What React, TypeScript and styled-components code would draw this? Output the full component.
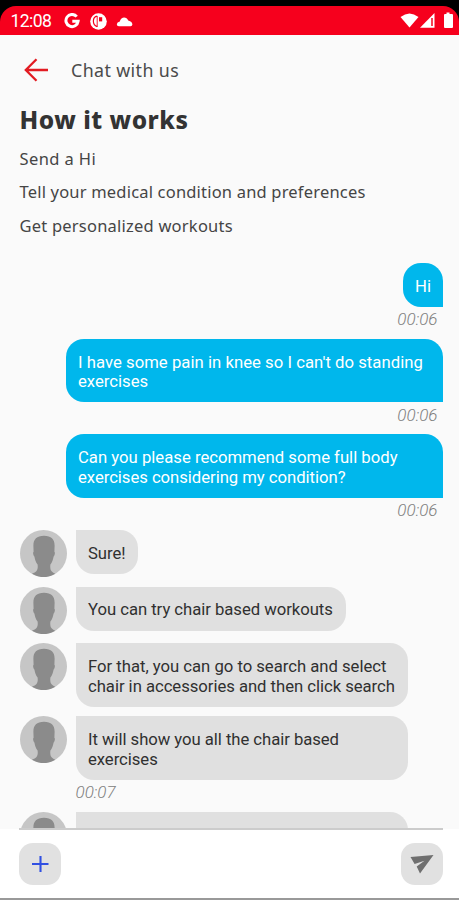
import React from 'react';
import styled, { createGlobalStyle } from 'styled-components';

const GlobalStyle = createGlobalStyle`
  * { box-sizing: border-box; }
  html, body { margin: 0; padding: 0; background: #000; }
`;

const Screen = styled.div`
  width: 459px;
  height: 900px;
  display: flex;
  flex-direction: column;
  overflow: hidden;
  background: #000;
  font-family: Roboto, sans-serif;
`;

const StatusBar = styled.header`
  flex: none;
  height: 28.5px;
  margin-top: 6px;
  padding: 2px 5px 0 10.5px;
  display: flex;
  align-items: center;
  justify-content: space-between;
  color: #fff;
  background: #f6001d;
  border-radius: 16px 16px 0 0;
`;

const StatusGroup = styled.div<{ $gap: number }>`
  display: flex;
  align-items: center;
  gap: ${({ $gap }) => $gap}px;
  svg { display: block; }
`;

const Clock = styled.span`
  width: 44px;
  font-size: 17.6px;
  font-weight: 400;
  line-height: 20px;
  letter-spacing: -0.6px;
  white-space: nowrap;
`;

const Content = styled.main`
  flex: none;
  height: 794.5px;
  padding-top: 14.5px;
  overflow: hidden;
  background: #fafafa;
`;

const TitleBar = styled.div`
  height: 42px;
  padding-left: 24px;
  display: flex;
  align-items: center;
  gap: 23px;
`;

const Title = styled.h1`
  margin: 0;
  font: 400 17.8px/24px "Noto Sans", sans-serif;
  letter-spacing: 0.4px;
  color: #4b4b4b;
`;

const Intro = styled.section`
  padding: 12px 20px 0 19.5px;
  height: 172px;
  font-family: "Noto Sans", sans-serif;
  color: #454545;
`;

const Heading = styled.h2`
  margin: 0 0 5px;
  font-size: 24.5px;
  font-weight: 800;
  line-height: 34px;
  letter-spacing: 0.5px;
  color: #333;
`;

const Step = styled.p<{ $spacing: number }>`
  margin: 0;
  font-size: 16.5px;
  line-height: 33.3px;
  white-space: nowrap;
  letter-spacing: ${({ $spacing }) => $spacing}px;
`;

const Messages = styled.section`
  display: flex;
  flex-direction: column;
  padding: 0 16px 0 19.5px;
`;

const IncomingRow = styled.div`
  display: flex;
  align-items: flex-start;
  gap: 9.5px;
  margin-bottom: 9.6px;
  min-height: 47px;
  &:has(+ time) { margin-bottom: 0; }
`;

const Bubble = styled.div<{ $mine?: boolean; $width: number }>`
  width: ${({ $width }) => $width}px;
  padding: 13.8px 0 10.4px 12px;
  font-size: 16.7px;
  line-height: 19.7px;
  white-space: pre;
  align-self: ${({ $mine }) => ($mine ? 'flex-end' : 'flex-start')};
  color: ${({ $mine }) => ($mine ? '#fff' : '#303030')};
  background: ${({ $mine }) => ($mine ? '#00b7ec' : '#e0e0e0')};
  border-radius: ${({ $mine }) => ($mine ? '18px 18px 0 18px' : '0 18px 18px 18px')};
`;

const Line = styled.span<{ $spacing?: number }>`
  display: block;
  letter-spacing: ${({ $spacing = 0 }) => $spacing}px;
`;

const Time = styled.time<{ $mine?: boolean }>`
  height: 32px;
  padding: ${({ $mine }) => ($mine ? '2.4px 5.5px 0 0' : '2.4px 0 0 56px')};
  align-self: ${({ $mine }) => ($mine ? 'flex-end' : 'flex-start')};
  font-size: 17px;
  font-style: italic;
  font-weight: 300;
  line-height: 21px;
  color: #808080;
`;

const Composer = styled.footer`
  flex: none;
  height: 71px;
  padding: 0 16px 0 19px;
  background: #fff;
  border-bottom: 2px solid #999;
`;

const ComposerInner = styled.div`
  height: 69px;
  padding-top: 1px;
  display: flex;
  align-items: center;
  justify-content: space-between;
  border-top: 2px solid #ccc;
  margin-top: -1px;
`;

const RoundButton = styled.button`
  width: 42px;
  height: 42px;
  padding: 0;
  display: grid;
  place-items: center;
  border: 0;
  border-radius: 14px;
  background: #e1e1e1;
`;

const AvatarSvg = styled.svg`
  flex: none;
  display: block;
`;

const Avatar = () => (
  <AvatarSvg width="47" height="47" viewBox="0 0 47 47">
    <circle cx="23.5" cy="23.5" r="23.5" fill="#c6c6c6" />
    <path
      d="M24 5.8C16.5 5.8 13.2 9.5 13.4 16L13.6 21.8C12.6 22 13.3 25.8 14.4 26.4C14.9 29.6 16 32.4 17.6 34.6C18.2 39.5 17.2 42 12 43.8Q23.5 50.5 35.5 43.8C31 42 29.8 39.5 30.4 34.6C32 32.4 33.1 29.6 33.6 26.4C34.7 25.8 35.4 22 34.4 21.8L34.6 16C34.8 9.5 31.5 5.8 24 5.8Z"
      fill="#8b8b8b"
    />
  </AvatarSvg>
);

const BackArrow = () => (
  <svg width="24" height="24" viewBox="0 0 24 24" fill="none" stroke="#e21b22" strokeWidth="2.3">
    <path d="M24 12H2M12.5 1.3L1.8 12L12.5 22.7" />
  </svg>
);

interface Message {
  lines: { text: string; spacing?: number }[];
  width: number;
  mine?: boolean;
  time?: string;
}

const messages: Message[] = [
  { mine: true, width: 40, time: '00:06', lines: [{ text: 'Hi' }] },
  {
    mine: true, width: 377, time: '00:06',
    lines: [{ text: "I have some pain in knee so I can't do standing", spacing: 0.03 }, { text: 'exercises' }],
  },
  {
    mine: true, width: 377, time: '00:06',
    lines: [{ text: 'Can you please recommend some full body' }, { text: 'exercises considering my condition?', spacing: -0.04 }],
  },
  { width: 62, lines: [{ text: 'Sure!', spacing: -0.05 }] },
  { width: 269.5, lines: [{ text: 'You can try chair based workouts', spacing: -0.04 }] },
  {
    width: 332,
    lines: [
      { text: 'For that, you can go to search and select', spacing: -0.02 },
      { text: 'chair in accessories and then click search', spacing: -0.04 },
    ],
  },
  {
    width: 332, time: '00:07',
    lines: [{ text: 'It will show you all the chair based', spacing: -0.05 }, { text: 'exercises', spacing: -0.05 }],
  },
  { width: 332, lines: [{ text: ' ' }] },
];

const MessageItem = ({ message }: { message: Message }) => {
  const bubble = (
    <Bubble $mine={message.mine} $width={message.width}>
      {message.lines.map((line) => (
        <Line key={line.text} $spacing={line.spacing}>{line.text}</Line>
      ))}
    </Bubble>
  );
  return (
    <>
      {message.mine ? bubble : <IncomingRow><Avatar />{bubble}</IncomingRow>}
      {message.time && <Time $mine={message.mine}>{message.time}</Time>}
    </>
  );
};

export default function App() {
  return (
    <Screen>
      <GlobalStyle />
      <StatusBar>
        <StatusGroup $gap={9.5}>
          <Clock>12:08</Clock>
          <svg width="16" height="16" viewBox="0 0 16 16" fill="none" stroke="#fff" strokeWidth="3">
            <path d="M12.7 3.6A6.1 6.1 0 1 0 14.1 8.3H8.3" />
          </svg>
          <svg width="17" height="17" viewBox="0 0 17 17">
            <circle cx="8.5" cy="8.5" r="8.3" fill="#fff" />
            <path d="M7.2 3.2C2.2 4 2 12 7.2 13.6" fill="none" stroke="#f6001d" strokeWidth="1.2" />
            <path d="M7.2 3V14" stroke="#f6001d" strokeWidth="0.9" />
            <path d="M9 4.2H12.2V8.4H9Z" fill="#f6001d" />
          </svg>
          <svg width="17" height="11" viewBox="0 0 17 11">
            <path d="M2.8 10.2Q0.8 10 0.8 8.2Q1 6 3.8 5.4C5 0.2 10.8 0.2 12.2 4.6C15 5.2 16.4 6.8 16.4 8.6Q16.2 10.2 14.6 10.2Z" fill="#fff" />
          </svg>
        </StatusGroup>
        <StatusGroup $gap={0}>
          <svg width="54" height="18" viewBox="0 0 54 18" fill="#fff">
            <path d="M0.5 5Q9.5-2 18.5 5L9.5 15.5Z" />
            <path d="M34.5 1V15.8H20Z" />
            <path d="M32 6V14" stroke="#f6001d" strokeWidth="1.5" />
            <path d="M46.5 0.5H49.5V2H52Q53 2 53 3V15Q53 16 52 16H45Q44 16 44 15V3Q44 2 45 2H46.5Z" />
          </svg>
        </StatusGroup>
      </StatusBar>
      <Content>
        <TitleBar>
          <BackArrow />
          <Title>Chat with us</Title>
        </TitleBar>
        <Intro>
          <Heading>How it works</Heading>
          <Step $spacing={0.4}>Send a Hi</Step>
          <Step $spacing={0.19}>Tell your medical condition and preferences</Step>
          <Step $spacing={0.22}>Get personalized workouts</Step>
        </Intro>
        <Messages>
          {messages.map((message, index) => <MessageItem key={index} message={message} />)}
        </Messages>
      </Content>
      <Composer>
        <ComposerInner>
          <RoundButton aria-label="Add">
            <svg width="18" height="18" viewBox="0 0 18 18" stroke="#3150e2" strokeWidth="2.1">
              <path d="M9.5 1V17M1 9H17.5" />
            </svg>
          </RoundButton>
          <RoundButton aria-label="Send">
            <svg width="24" height="20" viewBox="0 0 24 20">
              <path d="M0.5 3L23.5 1L10 19.5L6.7 12.4L14.5 6.7L4.6 10Z" fill="#6f6f6f" />
            </svg>
          </RoundButton>
        </ComposerInner>
      </Composer>
    </Screen>
  );
}
